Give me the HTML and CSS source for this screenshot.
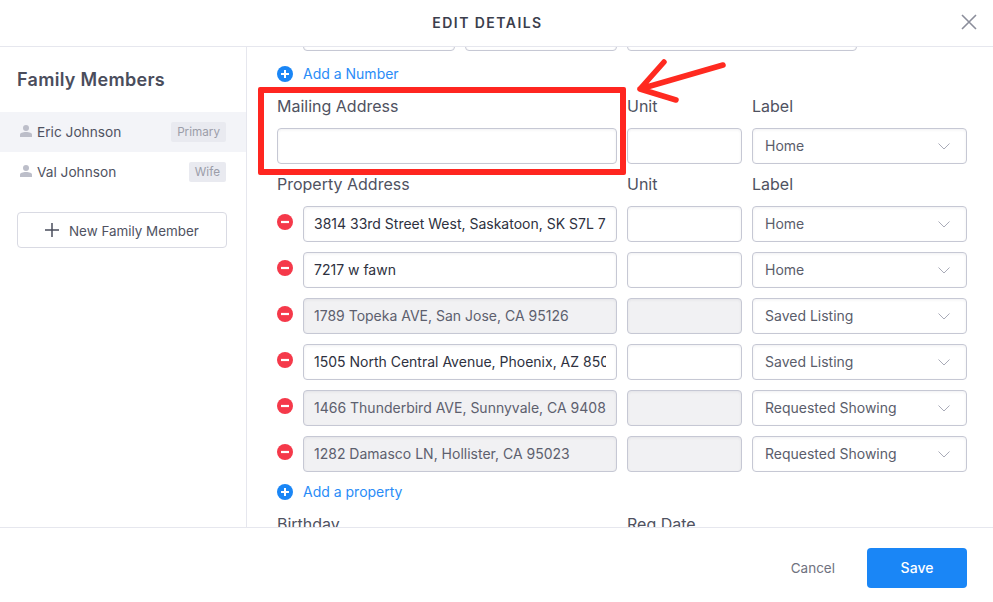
FILE: index.html
```html
<!DOCTYPE html>
<html lang="en">
<head>
<meta charset="utf-8">
<title>Edit Details</title>
<link rel="stylesheet" href="styles.css">
</head>
<body>
<div class="modal">
  <header class="modal-header">
    <h1 class="modal-title">EDIT DETAILS</h1>
    <button class="close" aria-label="Close">
      <svg width="16" height="16" viewBox="0 0 16 16"><path d="M1 1l14 14M15 1L1 15" fill="none" stroke="#8b8e9b" stroke-width="1.6"/></svg>
    </button>
  </header>
  <div class="modal-body">
    <aside class="sidebar">
      <h2 class="sidebar-title">Family Members</h2>
      <ul class="members">
        <li class="member member-active">
          <svg class="member-icon" width="12" height="12" viewBox="0 0 12 12"><circle cx="6" cy="3" r="3" fill="#bcbec9"/><path d="M0 12V9.6C0 8 2.6 7 6 7s6 1 6 2.6V12z" fill="#bcbec9"/></svg>
          <span class="member-name">Eric Johnson</span>
          <span class="badge">Primary</span>
        </li>
        <li class="member">
          <svg class="member-icon" width="12" height="12" viewBox="0 0 12 12"><circle cx="6" cy="3" r="3" fill="#bcbec9"/><path d="M0 12V9.6C0 8 2.6 7 6 7s6 1 6 2.6V12z" fill="#bcbec9"/></svg>
          <span class="member-name">Val Johnson</span>
          <span class="badge">Wife</span>
        </li>
      </ul>
      <button class="new-member">
        <svg width="14" height="14" viewBox="0 0 14 14"><path d="M7 0v14M0 7h14" stroke="#4a4d5c" stroke-width="1.5" fill="none"/></svg>
        <span class="new-member-text">New Family Member</span>
      </button>
    </aside>
    <main class="content">
      <div class="scrolled">
        <div class="phone-row">
          <div class="field"></div>
          <div class="field"></div>
          <div class="field"></div>
        </div>
        <div class="add-row add-number">
          <svg width="16" height="16" viewBox="0 0 16 16"><circle cx="8" cy="8" r="8" fill="#1a86f6"/><path d="M8 4v8M4 8h8" stroke="#fff" stroke-width="2"/></svg>
          <span class="add-text">Add a Number</span>
        </div>
        <div class="grid mailing">
          <label class="label">Mailing Address</label>
          <label class="label">Unit</label>
          <label class="label">Label</label>
          <div class="field"></div>
          <div class="field"></div>
          <div class="field select"><span class="field-text">Home</span><svg class="chev" width="12" height="7" viewBox="0 0 12 7"><path d="M.5.5L6 6 11.500.5" fill="none" stroke="#a9abb8"/></svg></div>
        </div>
        <div class="grid property">
          <label class="label">Property Address</label>
          <label class="label">Unit</label>
          <label class="label">Label</label>

          <div class="with-remove"><svg class="remove" width="16" height="16" viewBox="0 0 16 16"><circle cx="8" cy="8" r="8" fill="#f5394a"/><path d="M4 8h8" stroke="#fff" stroke-width="2.2"/></svg><div class="field filled"><span class="field-text">3814 33rd Street West, Saskatoon, SK S7L 7X6</span></div></div>
          <div class="field"></div>
          <div class="field select"><span class="field-text">Home</span><svg class="chev" width="12" height="7" viewBox="0 0 12 7"><path d="M.5.5L6 6 11.500.5" fill="none" stroke="#a9abb8"/></svg></div>

          <div class="with-remove"><svg class="remove" width="16" height="16" viewBox="0 0 16 16"><circle cx="8" cy="8" r="8" fill="#f5394a"/><path d="M4 8h8" stroke="#fff" stroke-width="2.2"/></svg><div class="field filled"><span class="field-text">7217 w fawn</span></div></div>
          <div class="field"></div>
          <div class="field select"><span class="field-text">Home</span><svg class="chev" width="12" height="7" viewBox="0 0 12 7"><path d="M.5.5L6 6 11.500.5" fill="none" stroke="#a9abb8"/></svg></div>

          <div class="with-remove"><svg class="remove" width="16" height="16" viewBox="0 0 16 16"><circle cx="8" cy="8" r="8" fill="#f5394a"/><path d="M4 8h8" stroke="#fff" stroke-width="2.2"/></svg><div class="field disabled"><span class="field-text">1789 Topeka AVE, San Jose, CA 95126</span></div></div>
          <div class="field disabled"></div>
          <div class="field select"><span class="field-text">Saved Listing</span><svg class="chev" width="12" height="7" viewBox="0 0 12 7"><path d="M.5.5L6 6 11.500.5" fill="none" stroke="#a9abb8"/></svg></div>

          <div class="with-remove"><svg class="remove" width="16" height="16" viewBox="0 0 16 16"><circle cx="8" cy="8" r="8" fill="#f5394a"/><path d="M4 8h8" stroke="#fff" stroke-width="2.2"/></svg><div class="field filled"><span class="field-text">1505 North Central Avenue, Phoenix, AZ 85004</span></div></div>
          <div class="field"></div>
          <div class="field select"><span class="field-text">Saved Listing</span><svg class="chev" width="12" height="7" viewBox="0 0 12 7"><path d="M.5.5L6 6 11.500.5" fill="none" stroke="#a9abb8"/></svg></div>

          <div class="with-remove"><svg class="remove" width="16" height="16" viewBox="0 0 16 16"><circle cx="8" cy="8" r="8" fill="#f5394a"/><path d="M4 8h8" stroke="#fff" stroke-width="2.2"/></svg><div class="field disabled"><span class="field-text">1466 Thunderbird AVE, Sunnyvale, CA 94087</span></div></div>
          <div class="field disabled"></div>
          <div class="field select"><span class="field-text">Requested Showing</span><svg class="chev" width="12" height="7" viewBox="0 0 12 7"><path d="M.5.5L6 6 11.500.5" fill="none" stroke="#a9abb8"/></svg></div>

          <div class="with-remove"><svg class="remove" width="16" height="16" viewBox="0 0 16 16"><circle cx="8" cy="8" r="8" fill="#f5394a"/><path d="M4 8h8" stroke="#fff" stroke-width="2.2"/></svg><div class="field disabled"><span class="field-text">1282 Damasco LN, Hollister, CA 95023</span></div></div>
          <div class="field disabled"></div>
          <div class="field select"><span class="field-text">Requested Showing</span><svg class="chev" width="12" height="7" viewBox="0 0 12 7"><path d="M.5.5L6 6 11.500.5" fill="none" stroke="#a9abb8"/></svg></div>
        </div>
        <div class="add-row add-property">
          <svg width="16" height="16" viewBox="0 0 16 16"><circle cx="8" cy="8" r="8" fill="#1a86f6"/><path d="M8 4v8M4 8h8" stroke="#fff" stroke-width="2"/></svg>
          <span class="add-text">Add a property</span>
        </div>
        <div class="grid dates">
          <label class="label">Birthday</label>
          <label class="label">Reg Date</label>
        </div>
      </div>
    </main>
  </div>
  <footer class="modal-footer">
    <button class="cancel">Cancel</button>
    <button class="save">Save</button>
  </footer>
  <div class="callout-box"></div>
  <svg class="callout-arrow" width="100" height="60" viewBox="0 0 100 60"><path d="M91 8L8 32M32 5L8 32L44 43" fill="none" stroke="#ff2a20" stroke-width="5.5" stroke-linecap="round" stroke-linejoin="round"/></svg>
</div>
</body>
</html>
```

FILE: styles.css
```css
* { box-sizing: border-box; }
html, body { margin: 0; height: 100%; background: #fff; overflow: hidden; }
body { font-family: Inter, "Noto Sans", sans-serif; color: #4a4d5c; font-size: 14px; }
button { font-family: inherit; cursor: pointer; }
.modal { position: relative; display: flex; flex-direction: column; height: 100vh; }

.modal-header {
  flex: none; height: 47px; display: flex; align-items: center; justify-content: center;
  padding: 0 18px 2px 0; border-bottom: 1px solid #e6e7ee; position: relative;
}
.modal-title { margin: 0; font-size: 14px; font-weight: 600; letter-spacing: 1.45px; color: #3b3e4c; }
.close {
  position: absolute; right: 16px; top: 14px; width: 16px; height: 16px; padding: 0;
  border: 0; background: none; display: flex;
}

.modal-body { flex: 1; min-height: 0; display: flex; }

.sidebar { flex: none; width: 247px; border-right: 1px solid #e6e7ee; }
.sidebar-title { margin: 22px 0 21px 17px; font-size: 18px; line-height: 22px; font-weight: 600; letter-spacing: 0.3px; color: #4a4d5c; }
.members { list-style: none; margin: 0; padding: 0; }
.member { height: 40px; display: flex; align-items: center; padding: 0 20px; }
.member-active { background: #f3f4f8; }
.member-icon { flex: none; margin-top: -2px; }
.member-name { margin: 0 0 1px 5px; flex: 1; font-size: 13.7px; color: #4f5261; }
.badge {
  height: 20px; line-height: 20px; padding: 0 6px; border-radius: 2px;
  background: #e9eaf0; color: #9b9da9; font-size: 11.7px;
}
.new-member {
  display: flex; align-items: center; gap: 10px; width: 210px; height: 36px; margin: 20px 0 0 17px;
  padding: 0 0 0 27px; border: 1px solid #d9dae3; border-radius: 4px; background: #fff;
  color: #4f5261; font-size: 13.4px;
}
.new-member-text { margin-top: 2px; }

.content { flex: 1; min-width: 0; overflow: hidden; padding: 0 26px 0 30px; }
.scrolled { margin-top: -32px; }

.phone-row { display: grid; grid-template-columns: 152px 152px 230px; gap: 10px; margin-left: 26px; }

.field {
  height: 36px; border: 1px solid #c6c8d4; border-radius: 4px; background: #fff;
  box-shadow: inset 0 1px 3px rgba(40, 44, 70, 0.07);
  display: flex; align-items: center; padding: 0 10px; min-width: 0;
}
.field-text { flex: 1; min-width: 0; overflow: hidden; white-space: nowrap; font-size: 14px; line-height: 20px; }
.filled { color: #2e3140; }
.disabled { background: #f1f1f3; color: #5d606e; }
.select { padding: 0 16px 0 12px; color: #5a5d6b; }
.chev { flex: none; }

.add-row { display: flex; align-items: center; height: 20px; gap: 10px; color: #2a8cf7; font-size: 14px; }
.add-text { margin-bottom: 2px; }
.add-number { margin-top: 13px; }
.add-property { margin-top: 10px; }

.grid { display: grid; grid-template-columns: 340px 115px 215px; column-gap: 10px; }
.label { font-size: 16px; line-height: 20px; color: #4f5261; margin-bottom: 12px; }
.mailing { margin-top: 12px; }
.property { margin-top: 10px; row-gap: 10px; }
.property .label { margin-bottom: 2px; }
.dates { margin-top: 12px; }

.with-remove { display: flex; align-items: flex-start; gap: 10px; min-width: 0; }
.with-remove .field { flex: 1; }
.remove { flex: none; margin-top: 8px; }

.modal-footer {
  flex: none; height: 75px; border-top: 1px solid #e6e7ee; background: #fff;
  display: flex; align-items: flex-start; justify-content: flex-end; padding: 20px 26px 0 0;
}
.cancel { height: 40px; border: 0; background: none; padding: 0; margin-right: 32px; color: #6f7280; font-size: 13.5px; }
.save {
  width: 100px; height: 40px; border: 0; border-radius: 4px; background: #1a86f6;
  color: #fff; font-size: 14px; font-weight: 500; padding: 0 0 2px;
}

.callout-box {
  position: absolute; left: 258px; top: 87px; width: 368px; height: 88px;
  border: 6px solid #ff2620; border-radius: 2px; pointer-events: none;
}
.callout-arrow { position: absolute; left: 632px; top: 57px; pointer-events: none; }
```
